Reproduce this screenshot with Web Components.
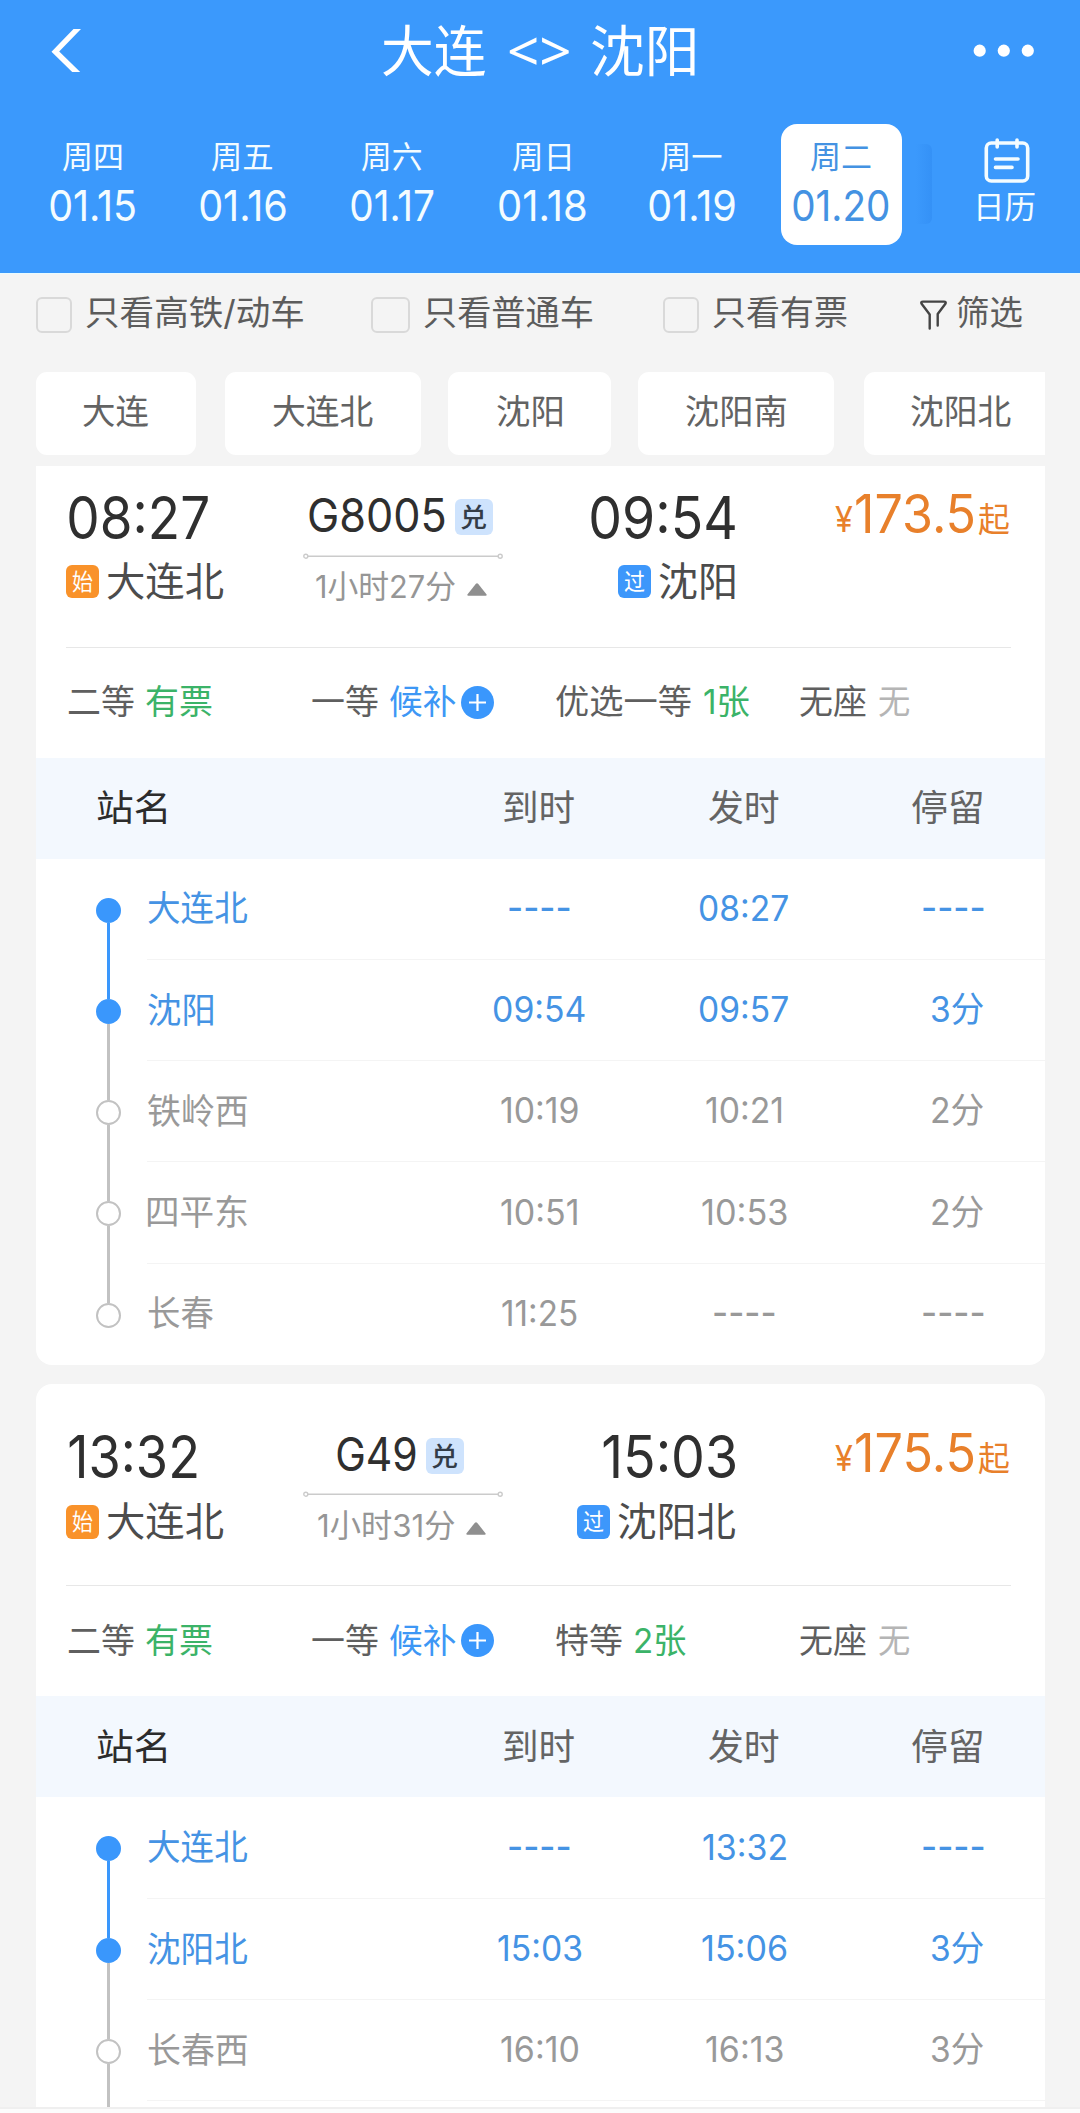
<!DOCTYPE html>
<html lang="zh-CN">
<head>
<meta charset="utf-8">
<title>大连 <> 沈阳</title>
<style>
html,body{margin:0;padding:0;background:#f4f4f4}
body{width:1080px;height:2113px;overflow:hidden;font-family:Inter,"Noto Sans CJK SC",sans-serif;-webkit-font-smoothing:antialiased}
</style>
</head>
<body>
<train-app></train-app>
<script>
const define=(name,html,setup)=>customElements.define(name,class extends HTMLElement{
  connectedCallback(){
    if(this.shadowRoot)return;
    const root=this.attachShadow({mode:'open'});
    const t=document.createElement('template');
    t.innerHTML=typeof html==='function'?html(this):html;
    root.append(t.content.cloneNode(true));
    if(setup)setup(this,root);
  }
});

/* Text run stretched so that its ink fills exactly `w` pixels. */
const ctx=document.createElement('canvas').getContext('2d');
define('fit-text',`<style>
:host{display:block;flex:none;line-height:1.2;white-space:pre}
span{display:inline-block;transform-origin:0 50%}
</style><span><slot></slot></span>`,(el,root)=>{
  const w=+el.getAttribute('w');
  const cs=getComputedStyle(el);
  ctx.font=`${cs.fontWeight} ${cs.fontSize} ${cs.fontFamily}`;
  const m=ctx.measureText(el.textContent);
  const s=w/(m.actualBoundingBoxLeft+m.actualBoundingBoxRight);
  el.style.width=w+'px';
  root.querySelector('span').style.transform=`translateX(${m.actualBoundingBoxLeft*s}px) scaleX(${s})`;
});
const fit=(t,w,cls='')=>`<fit-text w="${w}" class="${cls}">${t}</fit-text>`;

define('nav-bar',`<style>
:host{display:flex;height:104px;align-items:center;justify-content:space-between;color:#fff;padding:0 46px 0 51px;box-sizing:border-box}
svg{display:block;flex:none}
.t{display:flex;align-items:center;font-size:54.5px;height:100px;box-sizing:border-box}
.a{font-family:"Noto Sans",sans-serif;margin:-4px 23px 0;font-size:55px}
</style>
<svg width="54" height="104" viewBox="51 0 54 104"><path d="M73.5 29h7.5L59.2 51.6 80.2 72h-8L51.5 51.7z" fill="#fff"/></svg>
<div class="t">${fit('大连',103)}${fit('&lt;&gt;',60,'a')}${fit('沈阳',103)}</div>
<svg width="62" height="104" viewBox="0 0 62 104"><g fill="#fff"><circle cx="7.7" cy="50.7" r="6.1"/><circle cx="31.8" cy="50.7" r="6.1"/><circle cx="55.8" cy="50.7" r="6.1"/></g></svg>`);

define('date-item',el=>{const [d,dw,n,nw]=el.getAttribute('v').split('|');return `<style>
:host{display:flex;justify-content:center;width:149.7px;flex:none;color:#f4fcff}
.b{width:121px;height:121px;box-sizing:border-box;padding-top:8px;border-radius:16px}
.l{height:49px;display:flex;align-items:center;justify-content:center}
.d{font-size:31px}.n{font-size:42.5px}
:host([on]) .b{background:#fff;color:#4492e2}
</style><div class="b"><div class="l d">${fit(d,dw)}</div><div class="l n">${fit(n,nw)}</div></div>`});

define('date-strip',`<style>
:host{display:flex;height:169px;padding:20px 0 0 18px;box-sizing:border-box}
.sh{width:16px;height:80px;margin:20px 0 0 0;flex:none;background:linear-gradient(90deg,rgba(40,130,235,0),rgba(40,130,235,.34));border-radius:0 6px 6px 0}
.cal{width:60px;margin-left:44.5px;display:flex;flex-direction:column;align-items:center;color:#f4fcff;font-size:31px}
.cal svg{margin-top:12px;display:block}
.l{height:49px;display:flex;align-items:center;margin-top:-2px}
</style>
<date-item v="周四|59|01.15|85.4"></date-item><date-item v="周五|60.5|01.16|85.7"></date-item><date-item v="周六|59.5|01.17|83"></date-item><date-item v="周日|57|01.18|86.5"></date-item><date-item v="周一|60.5|01.19|85.7"></date-item><date-item v="周二|60|01.20|95.7" on></date-item>
<div class="sh"></div>
<div class="cal"><svg width="46" height="48" viewBox="0 0 46 48" fill="none" stroke="#f4fcff" stroke-width="3.6" stroke-linecap="round"><rect x="2.3" y="7" width="41.4" height="38" rx="5"/><path d="M13.2 4v7M33 4v7M11.5 23H34M11.5 31.4H28"/></svg>
<div class="l">${fit('日历',57)}</div></div>`);

define('filter-check',el=>`<style>
:host{display:flex;align-items:center;font-size:34.4px;color:#5c5c5c;height:78px}
i{width:${el.getAttribute('bw')}px;height:36px;box-sizing:border-box;border:2.5px solid #d9d9d9;border-radius:6px;margin:4px 14px 0 0;flex:none}
</style><i></i>${fit(el.getAttribute('label'),el.getAttribute('w'))}`);

define('filter-bar',`<style>
:host{display:flex;height:80px;padding-left:36px;border-top:1px solid #e9fbff;box-sizing:border-box;margin-bottom:19px}
.m2{margin-left:68px}.m3{margin-left:70.5px}
.f{display:flex;align-items:center;height:78px;margin-left:73.5px;font-size:34.4px;color:#5c5c5c;gap:10px}
svg{display:block;margin-top:4px}
</style>
<filter-check bw="35.5" w="217.5" label="只看高铁/动车"></filter-check>
<filter-check class="m2" bw="39" w="168.5" label="只看普通车"></filter-check>
<filter-check class="m3" bw="35.5" w="133.5" label="只看有票"></filter-check>
<div class="f"><svg width="27" height="30" viewBox="0 0 27 30" fill="none" stroke="#444" stroke-width="2.4" stroke-linejoin="round" stroke-linecap="round"><path d="M9.7 28.5V14.5L1.6 3.8Q.6 1.6 3 1.6H24Q26.4 1.6 25.4 3.8L17.7 14V25.5"/></svg>${fit('筛选',65.5)}</div>`);

define('station-tabs',`<style>
:host{display:flex;margin:0 35px 0 36px;height:82.5px;overflow:hidden;font-size:34.4px;color:#636363}
div{background:#fff;border-radius:11px;display:flex;align-items:center;justify-content:center;height:82.5px;flex:none;padding-bottom:3.5px;box-sizing:border-box}
</style>
<div style="width:159.5px;margin-right:29.5px">${fit('大连',65.5)}</div>
<div style="width:196px;margin-right:27px">${fit('大连北',100)}</div>
<div style="width:162.5px;margin-right:27.5px">${fit('沈阳',65.5)}</div>
<div style="width:195.5px;margin-right:30px">${fit('沈阳南',100.5)}</div>
<div style="width:195.5px">${fit('沈阳北',100)}</div>`);

define('station-tag',el=>`<style>
:host{display:flex;align-items:center;gap:8px;height:64px;font-size:40px;color:#4c4c4c}
i{font-style:normal;width:33px;height:33.5px;border-radius:6px;background:${el.getAttribute('kind')==='始'?'#f9922a':'#3d97fb'};color:#fff;font-size:23px;display:flex;align-items:center;justify-content:center;margin-top:2px;padding-top:2px;box-sizing:border-box;flex:none}
.s{padding-top:3px}
</style><i>${fit(el.getAttribute('kind'),21)}</i>${fit(el.getAttribute('name'),el.getAttribute('w'),'s')}`);

define('trip-head',el=>{const d=el.data;return `<style>
:host{display:grid;grid-template-columns:237px 200px 233px 274px;height:201px;padding:40px 0 0 30px;box-sizing:border-box;margin-top:${d.shift}px;color:#2f2f2f}
.time{height:63px;display:flex;align-items:center;font-size:59px;padding-top:2px;box-sizing:border-box}
.dep .time{padding-left:2.5px}
.arr{display:flex;flex-direction:column;align-items:flex-end;padding-right:1px}
.no{height:59px;display:flex;align-items:center;justify-content:center;font-size:46px;gap:10px;padding:2px 5px 0 0;box-sizing:border-box}
.no i{font-style:normal;width:38px;height:35.5px;border-radius:6px;background:#cee3fd;display:flex;align-items:center;justify-content:center;font-size:26.5px;font-weight:500;color:#333c48;margin-top:2px;padding-top:1px;box-sizing:border-box}
.mid svg{display:block;margin-top:7px}
.dur{height:52px;display:flex;align-items:center;justify-content:center;font-size:31.5px;color:#969696;gap:11px;padding:2px 3px 0 0;box-sizing:border-box}
.dur svg{margin-top:6px}
.price{height:56px;display:flex;align-items:center;justify-content:flex-end;color:#e8802b;padding:2px 1px 0 0;box-sizing:border-box}
.y{font-size:36px;padding-top:10px;margin-right:3px}.p{font-size:53px}.q{font-size:34.4px;padding-top:11px;margin-left:4px}
station-tag{margin-top:${d.tagShift}px}
</style>
<div class="dep"><div class="time">${fit(d.dep[0],d.dep[1])}</div><station-tag kind="始" name="大连北" w="116"></station-tag></div>
<div class="mid"><div class="no">${fit(d.no[0],d.no[1])}<i>${fit('兑',25.5)}</i></div>
<svg width="200" height="8" viewBox="0 0 200 8" fill="none" stroke="#cbcbcb" stroke-width="1.4"><path d="M5 4.2H195"/><circle cx="2.8" cy="4.2" r="2"/><circle cx="197.2" cy="4.2" r="2"/></svg>
<div class="dur">${fit(d.dur[0],d.dur[1])}<svg width="20" height="13" viewBox="0 0 20 13"><path d="M8.7.9Q10-.5 11.3.9L19.6 11.5Q20 12.8 18.7 12.8H1.3Q0 12.8.4 11.5z" fill="#8f8f8f"/></svg></div></div>
<div class="arr"><div class="time">${fit(d.arr[0],d.arr[1])}</div><station-tag kind="过" name="${d.to[0]}" w="${d.to[1]}"></station-tag></div>
<div class="price">${fit('¥',18,'y')}${fit(d.price,118,'p')}${fit('起',31.5,'q')}</div>`});

define('seat-list',el=>`<style>
:host{display:grid;grid-template-columns:repeat(4,244.3px);height:111px;margin:0 34px 0 30px;border-top:1.5px solid #e7e7e7;padding:0 0 1px 1.5px;box-sizing:border-box;font-size:34.4px;color:#5f5f5f}
div{display:flex;align-items:center;gap:13px}
.g{color:#3bb368}.b{color:#3d97f5}.n{color:#b5b5b5}
svg{margin:0 0 0 -8px;flex:none}
</style>${el.data.map(([a,aw,b,bw,c])=>`<div>${fit(a,aw)}${fit(b,bw,c)}${c==='b'?'<svg width="33" height="33" viewBox="0 0 33 33"><circle cx="16.5" cy="16.5" r="16.5" fill="#3a97fc"/><path d="M8 16.5H25M16.5 8V25" stroke="#fff" stroke-width="2.2"/></svg>':''}</div>`).join('')}`);

define('stop-head',`<style>
:host{display:flex;align-items:center;height:101px;background:#f3f8fe;padding:1px 63px 0 60.5px;box-sizing:border-box;font-size:36.7px;color:#646464}
.n{color:#2c2c2c;margin-right:337.5px}
.a{margin-right:134.5px}.b{margin-right:133px}
</style>${fit('站名',69.5,'n')}${fit('到时',70.5,'a')}${fit('发时',70,'b')}${fit('停留',70)}`);

define('stop-row',el=>{const [n,nw,a,aw,b,bw,s]=el.getAttribute('v').split('|');
const pos=el.getAttribute('pos')||'',on=el.hasAttribute('on');
return `<style>
:host{display:flex;height:101.3px;font-size:34.8px;color:${on?'#4593e4':'#999'}}
.rail{width:25px;margin:0 26px 0 60px;display:flex;flex-direction:column;align-items:center;flex:none}
.u{width:2.4px;height:39px;background:${pos.includes('f')?'transparent':pos.includes('t')?'#3a97fc':'#c2c2c2'}}
.o{width:25px;height:25px;box-sizing:border-box;border-radius:50%;flex:none;${on?'background:#3a97fc':'border:2.6px solid #c2c2c2'}}
.d{width:2.4px;flex:1;background:${pos.includes('l')?'transparent':pos.includes('f')?'#3a97fc':'#c2c2c2'}}
.r{flex:1;display:grid;grid-template-columns:289px 204.5px 205px 136.5px;align-items:center;padding:0 0 0 1px;box-sizing:border-box;border-bottom:1.6px solid ${pos.includes('l')?'transparent':'#f4f4f4'}}
.r>*{justify-self:center}.r>.n{justify-self:start}.r>.s{justify-self:end}
.r>.n{padding-top:1px}
.dash{margin-top:-2px;font-weight:500}
</style><div class="rail"><div class="u"></div><div class="o"></div><div class="d"></div></div>
<div class="r">${fit(n,nw,'n')}${fit(a,aw,a[0]==='-'?'dash':'')}${fit(b,bw,b[0]==='-'?'dash':'')}${fit(s,s[0]==='-'?60.5:51.5,s[0]==='-'?'s dash':'s')}</div>`});

const trips=[
{radius:'0 0 16px 16px',
 head:{shift:-20,tagShift:0,dep:['08:27',139],no:['G8005',136],dur:['1小时27分',139.5],arr:['09:54',144],to:['沈阳',76],price:'173.5'},
 seats:[['二等',65.5,'有票',65.5,'g'],['一等',65.5,'候补',66,'b'],['优选一等',134.5,'1张',45.5,'g'],['无座',65.5,'无',31,'n']],
 stops:[['大连北|99|----|60.5|08:27|88.5|----','on pos="f"'],['沈阳|65|09:54|91|09:57|88.5|3分','on pos="t"'],['铁岭西|99|10:19|77|10:21|76|2分',''],['四平东|99|10:51|76.5|10:53|85|2分',''],['长春|65|11:25|75|----|60.5|----','pos="l"']]},
{radius:'16px',more:true,
 head:{shift:0,tagShift:1.5,dep:['13:32',127.5],no:['G49',78.5],dur:['1小时31分',137],arr:['15:03',132],to:['沈阳北',117],price:'175.5'},
 seats:[['二等',65.5,'有票',65.5,'g'],['一等',65.5,'候补',66,'b'],['特等',65.5,'2张',51,'g'],['无座',65.5,'无',31,'n']],
 stops:[['大连北|99|----|60.5|13:32|83|----','on pos="f"'],['沈阳北|99|15:03|83.5|15:06|84.5|3分','on pos="t"'],['长春西|99|16:10|77|16:13|77|3分','']]}];

define('train-card',`<style>
:host{display:block;background:#fff;margin:0 35px 19.5px 36px;overflow:hidden}
.more{height:30px;padding-left:71.3px}
.more div{width:2.4px;height:30px;background:#c2c2c2}
</style>`,(el,root)=>{
  const t=el.data;
  el.style.borderRadius=t.radius;
  const head=document.createElement('trip-head');head.data=t.head;
  const seats=document.createElement('seat-list');seats.data=t.seats;
  root.append(head,seats,document.createElement('stop-head'));
  const rows=document.createElement('template');
  rows.innerHTML=t.stops.map(([v,a])=>`<stop-row v="${v}" ${a}></stop-row>`).join('')+(t.more?'<div class="more"><div></div></div>':'');
  root.append(rows.content);
});

define('train-list','<style>:host{display:block;margin-top:11px}</style>',(el,root)=>{
  for(const t of trips){
    const card=document.createElement('train-card');
    card.data=t;
    root.append(card);
  }
});

define('train-app',`<style>
:host{display:flex;flex-direction:column;width:1080px;height:2113px;overflow:hidden}
.top{background:#3b99fc;height:273px;flex:none}
.list{flex:1;min-height:0;overflow:hidden;background:#f4f4f4}
.foot{height:4px;flex:none;border-top:2px solid #efefef;background:#fcfcfc}
</style>
<div class="top"><nav-bar></nav-bar><date-strip></date-strip></div>
<div class="list"><filter-bar></filter-bar><station-tabs></station-tabs><train-list></train-list></div>
<div class="foot"></div>`);
</script>
</body>
</html>
